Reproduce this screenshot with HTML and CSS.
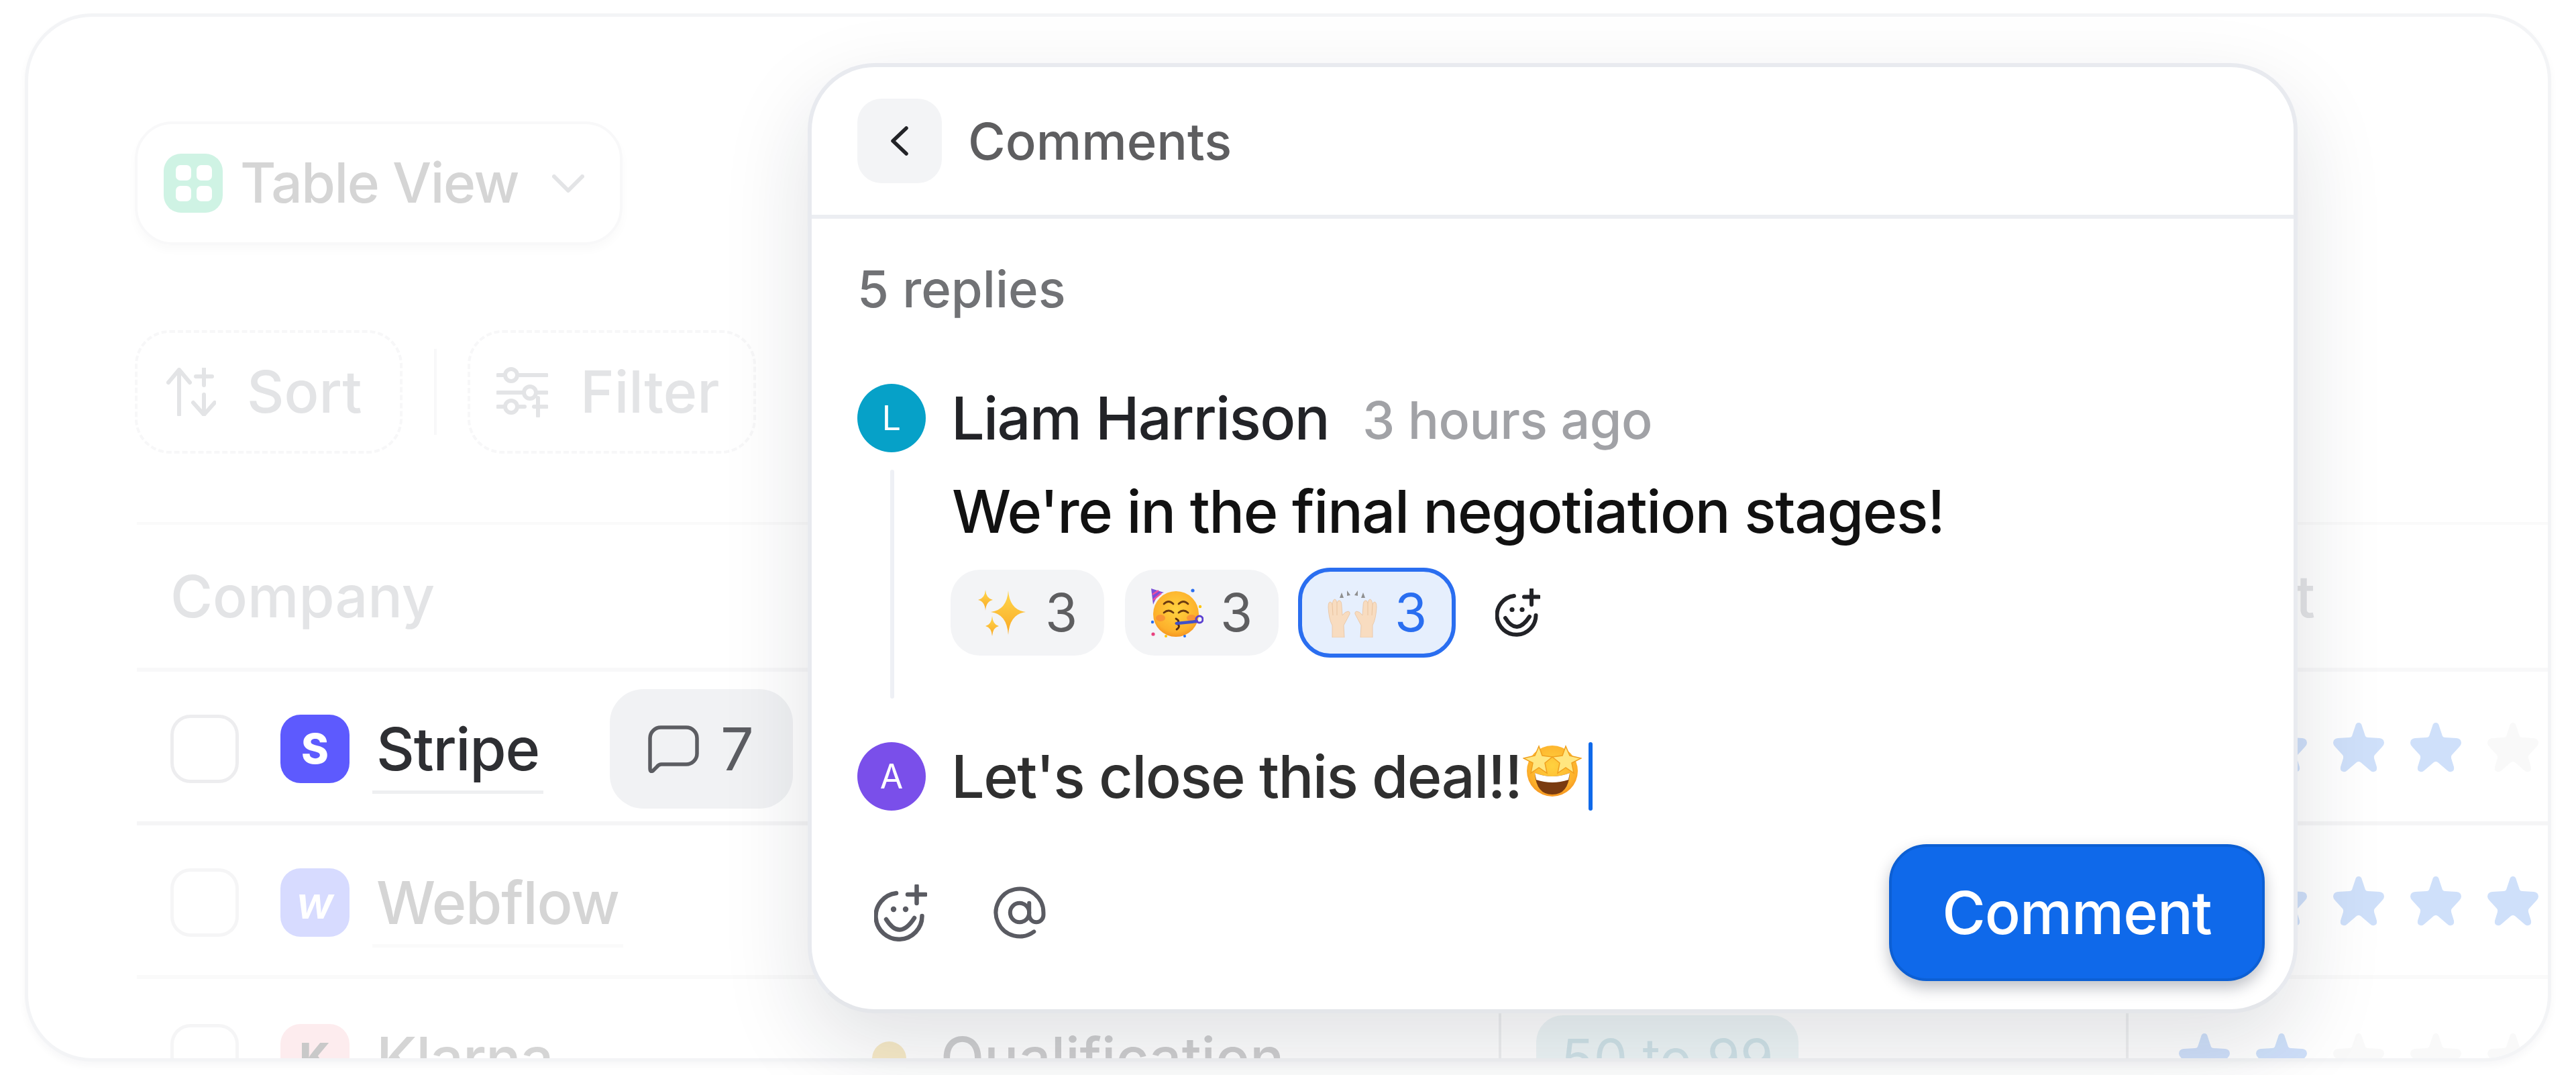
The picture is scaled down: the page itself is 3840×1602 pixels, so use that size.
FILE: index.html
```html
<!DOCTYPE html>
<html lang="en">
<head>
<meta charset="utf-8">
<title>Comments</title>
<link rel="stylesheet" href="styles.css">
</head>
<body>
<div class="page">
  <section class="card">
    <div class="view-pill">
      <span class="view-icon"><i></i><i></i><i></i><i></i></span>
      <span class="view-label">Table View</span>
      <svg class="view-chevron" viewBox="0 0 48 27"><path d="M3 3 L24 24 L45 3"/></svg>
    </div>
    <div class="filters">
      <div class="dash-btn sort-btn">
        <svg class="tool-icon" viewBox="0 0 74 72"><path d="M19 70V3M3 22 L19 3 L35 22M56 0V26M44 13H68M56 40V70M40 52 L56 70 L72 52"/></svg>
        <span>Sort</span>
      </div>
      <span class="filter-sep"></span>
      <div class="dash-btn filter-btn">
        <svg class="tool-icon" viewBox="0 0 77 75"><path d="M2 12H12M32 12H75M2 38H40M60 38H75M2 59H12M32 59H42M56 59H75M62 46V73"/><circle cx="22" cy="12" r="9"/><circle cx="50" cy="38" r="9"/><circle cx="22" cy="59" r="9"/></svg>
        <span>Filter</span>
      </div>
    </div>
    <div class="table">
      <div class="thead">
        <div class="th-company">Company</div>
        <div class="th-account">Account</div>
      </div>
      <div class="row row-active">
        <div class="cell-company">
          <span class="check"></span>
          <span class="logo logo-stripe">S</span>
          <span class="name">Stripe</span>
          <span class="comment-chip">
            <svg class="bubble" viewBox="0 0 76 71"><path d="M19 3H57a16 16 0 0 1 16 16V42a16 16 0 0 1-16 16H20Q16 58 13 62L8 67Q3 71 3 64V19A16 16 0 0 1 19 3Z"/></svg>
            <span>7</span>
          </span>
        </div>
        <div></div><div></div>
        <div class="stars">
          <svg class="star on" viewBox="0 0 78 74"><use href="#star"/></svg><svg class="star on" viewBox="0 0 78 74"><use href="#star"/></svg><svg class="star on" viewBox="0 0 78 74"><use href="#star"/></svg><svg class="star on" viewBox="0 0 78 74"><use href="#star"/></svg><svg class="star off" viewBox="0 0 78 74"><use href="#star"/></svg>
        </div>
      </div>
      <div class="row">
        <div class="cell-company">
          <span class="check check-faint"></span>
          <span class="logo logo-webflow">w</span>
          <span class="name name-faint">Webflow</span>
        </div>
        <div></div><div></div>
        <div class="stars">
          <svg class="star on" viewBox="0 0 78 74"><use href="#star"/></svg><svg class="star on" viewBox="0 0 78 74"><use href="#star"/></svg><svg class="star on" viewBox="0 0 78 74"><use href="#star"/></svg><svg class="star on" viewBox="0 0 78 74"><use href="#star"/></svg><svg class="star on" viewBox="0 0 78 74"><use href="#star"/></svg>
        </div>
      </div>
      <div class="row row-last">
        <div class="cell-company">
          <span class="check check-faint"></span>
          <span class="logo logo-klarna">K</span>
          <span class="name name-faint">Klarna</span>
        </div>
        <div class="cell-stage"><span class="dot"></span><span class="stage-label">Qualification</span></div>
        <div class="cell-size"><span class="size-pill">50 to 99</span></div>
        <div class="stars">
          <svg class="star on" viewBox="0 0 78 74"><use href="#star"/></svg><svg class="star on" viewBox="0 0 78 74"><use href="#star"/></svg><svg class="star off" viewBox="0 0 78 74"><use href="#star"/></svg><svg class="star off" viewBox="0 0 78 74"><use href="#star"/></svg><svg class="star off" viewBox="0 0 78 74"><use href="#star"/></svg>
        </div>
      </div>
    </div>
  </section>

  <section class="modal">
    <header class="modal-head">
      <span class="back-btn"><svg class="back-icon" viewBox="0 0 28 44"><path d="M24 3 L4 22 L24 41"/></svg></span>
      <span class="modal-title">Comments</span>
    </header>
    <div class="replies">5 replies</div>
    <div class="comment-head">
      <span class="avatar avatar-l">L</span>
      <span class="author">Liam Harrison</span>
      <span class="time">3 hours ago</span>
    </div>
    <div class="comment-body">
      <span class="rail"></span>
      <div class="comment-main">
        <p class="message">We're in the final negotiation stages!</p>
        <div class="reactions">
          <span class="reaction">
            <svg class="emoji-sparkles" viewBox="0 0 71 70">
              <defs><linearGradient id="gold" x1="0" y1="0" x2="0" y2="1"><stop offset="0" stop-color="#ffd84d"/><stop offset="1" stop-color="#f9a825"/></linearGradient></defs>
              <path fill="url(#gold)" d="M45 2Q47 31 71 34Q47 37 45 68Q43 37 19 34Q43 31 45 2Z"/>
              <path fill="url(#gold)" d="M11 1Q12 14 22 16Q12 18 11 32Q10 18 0 16Q10 14 11 1Z"/>
              <path fill="url(#gold)" d="M21 40Q22 53 31 55Q22 57 21 70Q20 57 11 55Q20 53 21 40Z"/>
            </svg>
            <span>3</span>
          </span>
          <span class="reaction">
            <svg class="emoji-party" viewBox="0 0 78 73">
              <defs><radialGradient id="face" cx=".5" cy=".4" r=".65"><stop offset="0" stop-color="#ffd23f"/><stop offset=".75" stop-color="#fdb02b"/><stop offset="1" stop-color="#f28a1c"/></radialGradient></defs>
              <circle cx="37" cy="38" r="34" fill="url(#face)"/>
              <path d="M0 0L3 24Q9 8 19 6Z" fill="#7a4fd8"/><path d="M2 9L11 3M3 17L15 7" stroke="#ee4fa0" stroke-width="2.5" fill="none"/>
              <path d="M19 23Q26 16 33 23M41 23Q48 16 55 23M19 36Q26 30 33 36M41 36Q48 30 55 36" stroke="#6b3a10" stroke-width="2.8" fill="none" stroke-linecap="round"/>
              <ellipse cx="14" cy="44" rx="7" ry="5" fill="#f5723b" opacity=".5"/><ellipse cx="60" cy="44" rx="7" ry="5" fill="#f5723b" opacity=".5"/>
              <path d="M37 45Q44 49 38 52Q45 56 38 61" stroke="#5a2d0c" stroke-width="2.8" fill="none" stroke-linecap="round"/>
              <path d="M38 52L68 49" stroke="#3f51c8" stroke-width="4.5" stroke-linecap="round"/><circle cx="72" cy="46" r="5" fill="none" stroke="#5a3fd0" stroke-width="3"/>
              <circle cx="62" cy="3" r="2.6" fill="#2a6ef0"/><circle cx="3" cy="68" r="2.6" fill="#e8407f"/><circle cx="22" cy="71" r="2" fill="#ffc400"/><circle cx="50" cy="71" r="2" fill="#2a6ef0"/><circle cx="73" cy="27" r="2.2" fill="#ffc400"/><circle cx="2" cy="50" r="2.2" fill="#2a6ef0"/>
            </svg>
            <span>3</span>
          </span>
          <span class="reaction reaction-active">
            <svg class="emoji-hands" viewBox="0 0 78 73">
              <path d="M20 14L23 6L26 14ZM31 11L31 3L36 10ZM42 10L47 3L47 11ZM52 14L55 6L58 14Z" fill="#8f8f8f"/>
              <path fill="#f8dcc0" stroke="#e9c39e" stroke-width=".8" d="M3 28Q3 20 6 20Q8 20 9 24Q10 16 13 16Q15 16 16 22Q17 17 20 18Q23 19 23 26L24 40Q28 34 33 34Q36 35 35 38L26 55L27 73H9V55Q4 46 3 28Z"/>
              <path fill="#f8dcc0" stroke="#e9c39e" stroke-width=".8" d="M75 28Q75 20 72 20Q70 20 69 24Q68 16 65 16Q63 16 62 22Q61 17 58 18Q55 19 55 26L54 40Q50 34 45 34Q42 35 43 38L52 55L51 73H69V55Q74 46 75 28Z"/>
              <path d="M9 24L10 40M16 22L16 40M69 24L68 40M62 22L62 40" stroke="#e9c39e" stroke-width="1" fill="none"/>
            </svg>
            <span>3</span>
          </span>
          <svg class="add-emoji add-dark" viewBox="0 0 67 72"><path d="M28 11A29 29 0 1 0 60.5 40M54 1V24M43 12.5H65M15 44Q32 71 51 42"/><circle class="eye" cx="25" cy="31.5" r="3.6"/><circle class="eye" cx="40" cy="31.5" r="3.6"/></svg>
        </div>
      </div>
    </div>
    <div class="input-row">
      <span class="avatar avatar-a">A</span>
      <span class="draft">Let's close this deal!!</span>
      <svg class="emoji-star" viewBox="0 0 88 82">
        <circle cx="44" cy="43" r="38" fill="url(#face)"/>
        <path d="M24 6L29 20L44 22L33 31L36 46L24 38L12 46L15 31L1 24L18 20Z" fill="#ffe680" stroke="#f0a01e" stroke-width="1.5"/>
        <path d="M64 6L70 20L87 24L73 31L76 46L64 38L52 46L55 31L44 22L59 20Z" fill="#ffe680" stroke="#f0a01e" stroke-width="1.5"/>
        <path d="M18 46Q44 56 70 46Q68 78 44 78Q20 78 18 46Z" fill="#7a3b10"/>
        <path d="M18 46Q44 56 70 46L68 56Q44 64 20 56Z" fill="#fff"/>
      </svg>
      <span class="caret"></span>
    </div>
    <div class="composer">
      <svg class="add-emoji add-grey" viewBox="0 0 79 85"><path d="M33 13A34.5 34.5 0 1 0 71.5 47M63.5 2V28M50 15H77M18 52Q38 84 60 50"/><circle class="eye" cx="29" cy="37" r="4.2"/><circle class="eye" cx="47" cy="37" r="4.2"/></svg>
      <svg class="at-icon" viewBox="1 1 22 22"><circle cx="12" cy="12" r="4"/><path d="M16 8v5a3 3 0 0 0 6 0v-1a10 10 0 1 0-4 8"/></svg>
      <button class="submit" type="button">Comment</button>
    </div>
  </section>
</div>
<svg class="sprite" aria-hidden="true"><defs><path id="star" d="M39 0Q43 0 44 5L49 20Q50 22 53 22L70 23Q77 24 77 30Q77 33 74 36L63 48Q61 50 62 53L66 66Q67 72 62 73Q59 74 56 71L42 59Q39 57 36 59L22 71Q19 74 16 73Q11 72 12 66L16 53Q17 50 15 48L4 36Q1 33 1 30Q1 24 8 23L25 22Q28 22 29 20L34 5Q35 0 39 0Z"/></defs></svg>
</body>
</html>
```

FILE: styles.css
```css
* { box-sizing: border-box; }
html, body { margin: 0; background: #fff; }
body { font-family: "Inter", "Liberation Sans", sans-serif; }
.sprite { width: 0; height: 0; display: block; }
.page { position: relative; width: 3840px; height: 1602px; padding: 20px 37px 20px 37px; overflow: hidden; }

.card { height: 1562px; border: 5px solid #f3f4f6; border-radius: 100px; overflow: hidden; background: #fff; padding: 156px 0 0 159px; box-shadow: 0 6px 12px rgba(20,30,60,.035); }

.view-pill { display: inline-flex; align-items: center; width: 727px; height: 184px; padding: 0 0 0 39px; border: 4px solid #f8f8f9; border-radius: 56px; box-shadow: 0 8px 14px rgba(20,30,60,.025); }
.view-icon { width: 88px; height: 88px; border-radius: 26px; background: #cff3e4; display: grid; grid-template-columns: 23px 23px; grid-auto-rows: 23px; gap: 8px; padding: 17px 18px; }
.view-icon i { background: #fff; border-radius: 7px; }
.view-label { margin-left: 26px; font-size: 82px; font-weight: 500; letter-spacing: -1.4px; line-height: 100px; color: #d5d5d5; }
.view-chevron { width: 48px; height: 27px; margin-left: 50px; fill: none; stroke: #e3e4e6; stroke-width: 6; stroke-linecap: round; stroke-linejoin: round; }

.filters { display: flex; align-items: center; margin-top: 127px; height: 184px; }
.dash-btn { display: flex; align-items: center; height: 184px; border: 4px dashed #f7f7f8; border-radius: 52px; font-size: 86px; font-weight: 500; line-height: 100px; color: #e3e4e6; }
.sort-btn { width: 399px; padding-left: 43px; gap: 46px; }
.filter-btn { width: 430px; padding-left: 39px; gap: 48px; }
.tool-icon { width: 74px; height: 72px; fill: none; stroke: #e3e4e6; stroke-width: 6; stroke-linecap: round; stroke-linejoin: round; flex: none; }
.filter-btn .tool-icon { width: 77px; height: 75px; }
.filter-sep { width: 4px; height: 128px; margin: 0 46px 0 47px; background: #f8f8f9; }

.table { margin: 102px 0 0 3px; border-top: 4px solid #fafafa; }
.thead { display: flex; justify-content: space-between; height: 219px; padding: 0 0 0 50px; border-bottom: 6px solid #f8f8f9; font-size: 86px; font-weight: 500; line-height: 100px; color: #e3e4e6; align-items: center; }
.th-account { width: 500px; margin-right: 347px; text-align: right; }

.row { display: grid; grid-template-columns: 1012px 1018px 935px 1fr; height: 229px; border-bottom: 6px solid #fafafa; padding-top: 7px; align-items: center; }
.row-active { border-bottom-color: #f5f5f6; }
.row-last { border-bottom: 0; }
.cell-company { display: flex; align-items: center; padding-left: 50px; }
.check { width: 102px; height: 102px; border: 5px solid #ededef; border-radius: 30px; flex: none; }
.check-faint { border-color: #f5f5f6; }
.logo { width: 103px; height: 102px; margin-left: 62px; border-radius: 30px; flex: none; display: flex; align-items: center; justify-content: center; color: #fff; font-size: 62px; line-height: 1; font-weight: 800; }
.logo-stripe { background: #5d5afe; }
.logo-webflow { background: #d7dbff; font-style: italic; font-size: 66px; font-weight: 600; }
.logo-klarna { background: #fdecee; color: #c9c9c9; }
.name { margin-left: 34px; padding: 17px 6px 0; height: 134px; border-bottom: 5px solid #eeeff1; font-size: 88px; font-weight: 500; letter-spacing: -1.2px; line-height: 100px; color: #2e2f33; flex: none; }
.name-faint { color: #d5d5d5; border-bottom-color: #fafafa; }
.comment-chip { display: flex; align-items: center; width: 273px; height: 178px; margin-left: 99px; padding-left: 57px; gap: 32px; border-radius: 50px; background: #f1f2f4; color: #5c5d62; font-size: 88px; line-height: 100px; flex: none; }
.bubble { width: 76px; height: 71px; fill: none; stroke: #5c5d62; stroke-width: 5.5; flex: none; }

.cell-stage { display: flex; align-items: center; padding-left: 80px; border-left: 4px solid transparent; height: 100%; font-size: 85px; font-weight: 500; line-height: 100px; color: #cfcfd0; }
.dot { width: 51px; height: 51px; border-radius: 50%; background: #f8ebc8; flex: none; }
.stage-label { margin-left: 51px; }
.cell-size { display: flex; align-items: center; height: 100%; padding-left: 52px; border-left: 4px solid #f0f1f2; font-size: 80px; color: #d0e3e8; }
.size-pill { padding: 14px 37px; background: #eef6f7; border-radius: 40px; line-height: 100px; }
.stars { display: flex; gap: 37px; padding-left: 78px; margin-top: -4px; }
.row-last .stars { border-left: 4px solid #f0f1f2; padding-left: 74px; height: 100%; align-items: center; margin-top: 0; }
.star { width: 78px; height: 74px; flex: none; }
.star.on { fill: #cfe0fa; }
.star.off { fill: #f9f9f9; }

.modal { position: absolute; left: 1204px; top: 94px; width: 2221px; height: 1416px; border: 6px solid #e8eaef; border-bottom-color: #e4e6ea; border-radius: 100px; background: #fff; box-shadow: 0 50px 130px rgba(25,30,50,.13); display: flex; flex-direction: column; }
.modal-head { display: flex; align-items: center; flex: none; height: 226px; padding-left: 68px; border-bottom: 6px solid #eceef2; }
.back-btn { width: 126px; height: 126px; border-radius: 36px; background: #f3f4f6; display: flex; align-items: center; justify-content: center; }
.back-icon { width: 28px; height: 44px; fill: none; stroke: #222327; stroke-width: 5.5; stroke-linecap: round; stroke-linejoin: round; }
.modal-title { margin-left: 39px; font-size: 76px; font-weight: 500; letter-spacing: 0; line-height: 100px; color: #5e5e60; }
.replies { margin: 54px 0 0 68px; font-size: 76px; font-weight: 500; line-height: 100px; color: #717275; }
.comment-head { display: flex; align-items: center; margin: 92px 0 0 68px; height: 102px; }
.avatar { width: 102px; height: 102px; border-radius: 50%; flex: none; display: flex; align-items: center; justify-content: center; color: #fff; font-size: 50px; line-height: 1; }
.avatar-l { background: #06a1c8; }
.avatar-a { background: #7a4fea; }
.author { margin-left: 38px; font-size: 88px; font-weight: 500; letter-spacing: -1.7px; line-height: 100px; color: #222327; }
.time { margin-left: 50px; font-size: 77px; font-weight: 500; letter-spacing: -.5px; line-height: 100px; color: #a1a2a6; padding-top: 6px; }
.comment-body { display: flex; margin: 26px 0 0 117px; height: 341px; }
.rail { width: 6px; height: 100%; background: #eef0f5; border-radius: 3px; flex: none; }
.comment-main { margin-left: 84px; }
.message { margin: 12px 0 0 2px; font-size: 88px; font-weight: 500; letter-spacing: -1.45px; line-height: 100px; color: #111; white-space: nowrap; }
.reactions { display: flex; align-items: center; margin-top: 34px; height: 134px; }
.reaction { display: flex; align-items: center; width: 229px; height: 128px; margin-right: 31px; padding-left: 41px; gap: 29px; background: #f3f4f6; border-radius: 44px; color: #5e5e60; font-size: 78px; line-height: 100px; }
.reaction span { display: block; }
.emoji-sparkles { width: 71px; height: 70px; flex: none; }
.emoji-party { width: 78px; height: 73px; flex: none; margin-left: -2px; margin-right: -4px; }
.reaction-active { width: 235px; height: 134px; margin: 0 59px 0 -2px; padding-left: 36px; gap: 24px; border: 6px solid #2a6ef0; background: #e6effd; color: #2a6ef0; border-radius: 48px; }
.emoji-hands { width: 78px; height: 73px; flex: none; }
.add-emoji { fill: none; stroke-linecap: round; flex: none; }
.add-dark { width: 67px; height: 72px; stroke: #222327; stroke-width: 6; }
.add-dark .eye { fill: #222327; stroke: none; }
.add-grey { width: 79px; height: 85px; stroke: #5a5b62; stroke-width: 6.5; }
.add-grey .eye { fill: #5a5b62; stroke: none; }
.input-row { display: flex; align-items: center; margin: 65px 0 0 68px; height: 102px; }
.draft { margin-left: 38px; font-size: 88px; font-weight: 500; letter-spacing: -1.6px; line-height: 100px; color: #2f2f2f; }
.emoji-star { width: 88px; height: 82px; margin: -20px 0 0 2px; flex: none; }
.caret { width: 6px; height: 102px; margin-left: 10px; background: #0f69ea; border-radius: 3px; }
.composer { display: flex; align-items: center; margin-top: 50px; height: 204px; padding: 0 43px 0 93px; }
.at-icon { width: 78px; height: 78px; margin-left: 99px; fill: none; stroke: #5a5b62; stroke-width: 1.7; stroke-linecap: round; stroke-linejoin: round; }
.submit { width: 560px; height: 204px; margin-left: auto; border: 4px solid #0c5fd4; border-radius: 56px; background: #0f69ea; color: #fff; font-family: inherit; font-size: 88px; font-weight: 500; letter-spacing: -1px; line-height: 100px; box-shadow: 0 10px 22px rgba(20,30,50,.28); }
```
